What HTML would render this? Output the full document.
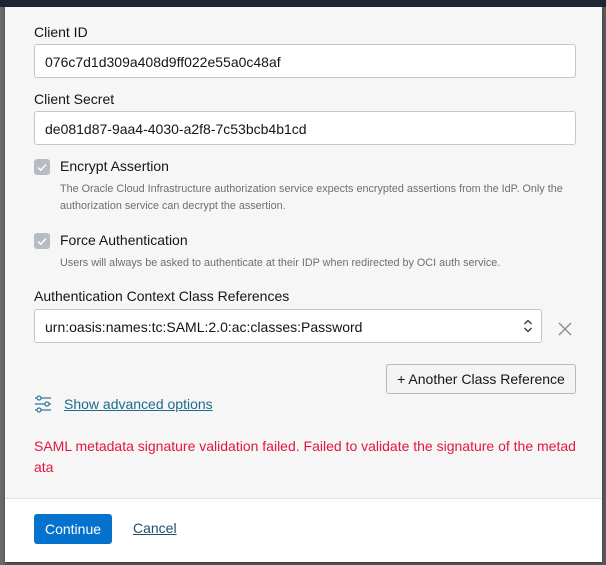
<!DOCTYPE html>
<html><head><meta charset="utf-8"><style>
*{box-sizing:border-box;margin:0;padding:0}
body{width:606px;height:565px;overflow:hidden;background:#5a5a5a;font-family:"Liberation Sans",Arial,sans-serif;position:relative}
.top{position:absolute;left:0;top:0;width:606px;height:7px;background:#1f2633}
.left{position:absolute;left:0;top:7px;width:5px;height:558px;background:#6a6a6a}
.modal{position:absolute;left:5px;top:7px;width:597px;height:555px;background:#f6f6f6;box-shadow:0 1px 3px rgba(0,0,0,.4)}
.footer{position:absolute;left:0;top:491px;width:597px;height:64px;background:#fff;border-top:1px solid #e2e2e2}
.abs{position:absolute}
.label{font-size:14px;color:#161513}
.input{position:absolute;left:29px;width:542px;height:34px;background:#fff;border:1px solid #c5c7cb;border-radius:3px;font-size:14px;color:#161513;padding:9px 10px 0 10px}
.cb{position:absolute;left:29px;width:16px;height:16px;background:#b7bcc3;border-radius:3px}
.cb svg{position:absolute;left:2px;top:2px}
.help{font-size:10.8px;color:#6f6f6f;line-height:17px}
</style></head><body>
<div class="top"></div>
<div class="left"></div>
<div class="modal">
  <div class="abs label" style="left:29px;top:17px">Client ID</div>
  <div class="input" style="top:37px">076c7d1d309a408d9ff022e55a0c48af</div>
  <div class="abs label" style="left:29px;top:84px">Client Secret</div>
  <div class="input" style="top:104px">de081d87-9aa4-4030-a2f8-7c53bcb4b1cd</div>

  <div class="cb" style="top:152px"><svg width="12" height="12" viewBox="0 0 12 12"><path d="M2 6.5l2.7 2.7L10 3.5" fill="none" stroke="#fff" stroke-width="1.4"/></svg></div>
  <div class="abs label" style="left:55px;top:151px">Encrypt Assertion</div>
  <div class="abs help" style="left:55px;top:174px;width:530px">The Oracle Cloud Infrastructure authorization service expects encrypted assertions from the IdP. Only the authorization service can decrypt the assertion.</div>

  <div class="cb" style="top:226px"><svg width="12" height="12" viewBox="0 0 12 12"><path d="M2 6.5l2.7 2.7L10 3.5" fill="none" stroke="#fff" stroke-width="1.4"/></svg></div>
  <div class="abs label" style="left:55px;top:225px">Force Authentication</div>
  <div class="abs help" style="left:55px;top:248px">Users will always be asked to authenticate at their IDP when redirected by OCI auth service.</div>

  <div class="abs label" style="left:29px;top:281px">Authentication Context Class References</div>
  <div class="input" style="top:302px;width:508px">urn:oasis:names:tc:SAML:2.0:ac:classes:Password</div>
  <svg class="abs" style="left:518px;top:311px" width="10" height="16" viewBox="0 0 10 16"><path d="M1.5 6L5 2.5 8.5 6M1.5 10L5 13.5 8.5 10" fill="none" stroke="#333" stroke-width="1.3"/></svg>
  <svg class="abs" style="left:553px;top:315px" width="14" height="14" viewBox="0 0 14 14"><path d="M1 1L13 13M13 1L1 13" stroke="#8a8a8a" stroke-width="1.3"/></svg>

  <div class="abs" style="left:381px;top:357px;width:190px;height:30px;background:#f4f4f4;border:1px solid #b9b9b9;border-radius:3px;font-size:14px;color:#161513;text-align:center;line-height:28px">+ Another Class Reference</div>

  <svg class="abs" style="left:29px;top:388px" width="18" height="18" viewBox="0 0 18 18" fill="none" stroke="#2d7a97" stroke-width="1.2"><path d="M1 3h2M7 3h10M1 9h10M15 9h2M1 15h2M7 15h10"/><circle cx="5" cy="3" r="2"/><circle cx="13" cy="9" r="2"/><circle cx="5" cy="15" r="2"/></svg>
  <div class="abs" style="left:59px;top:389px;font-size:14px;color:#1e6b8c;text-decoration:underline">Show advanced options</div>

  <div class="abs" style="left:29px;top:429px;width:548px;font-size:14px;color:#e3173e;line-height:21px">SAML metadata signature validation failed. Failed to validate the signature of the metad ata</div>

  <div class="footer">
    <div class="abs" style="left:29px;top:15px;width:78px;height:30px;background:#0572ce;border-radius:3px;color:#fff;font-size:14px;text-align:center;line-height:30px">Continue</div>
    <div class="abs" style="left:128px;top:21px;font-size:14px;color:#1e4e6c;text-decoration:underline">Cancel</div>
  </div>
</div>
</body></html>
